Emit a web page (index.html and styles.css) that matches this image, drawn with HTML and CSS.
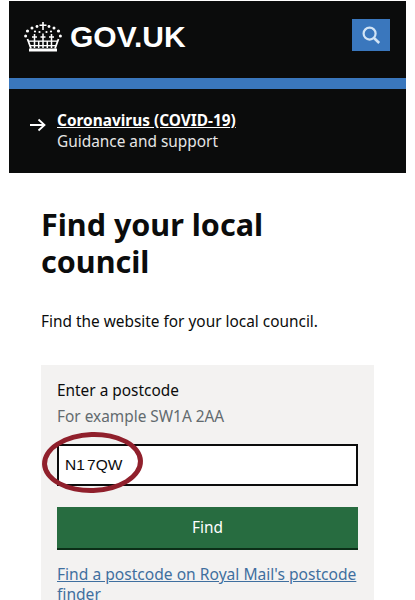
FILE: index.html
```html
<!DOCTYPE html>
<html lang="en">
<head>
  <meta charset="UTF-8" />
  <meta name="viewport" content="width=device-width, initial-scale=1.0"/>
  <title>Find your local council</title>
  <link rel="stylesheet" href="styles.css">
</head>
<body>
  <header class="site-header">
    <div class="masthead">
      <a class="logo" href="#">
        <svg class="crown" viewBox="0 0 38 30" width="38" height="30" aria-hidden="true">
          <g fill="#fff">
            <path d="M18.200 0h1.600v2.500h2.700v1.600h-2.700v4h-1.600v-4h-2.700V2.500h2.700z"/>
            <circle cx="13" cy="4.500" r="1.400"/><circle cx="25" cy="4.500" r="1.400"/>
            <circle cx="8" cy="6" r="1.500"/><circle cx="30" cy="6" r="1.500"/>
            <circle cx="3.500" cy="9" r="1.600"/><circle cx="34.500" cy="9" r="1.600"/>
            <circle cx="1.600" cy="14" r="1.500"/><circle cx="36.400" cy="14" r="1.500"/>
            <circle cx="11" cy="9.500" r="1.100"/><circle cx="27" cy="9.500" r="1.100"/>
            <circle cx="15.500" cy="10" r="1.100"/><circle cx="22.500" cy="10" r="1.100"/>
            <rect x="5" y="26.500" width="28" height="3"/>
            <rect x="4.500" y="18.500" width="29" height="1.300"/>
            <rect x="5.500" y="23" width="27" height="1.300"/>
          </g>
          <path d="M3.500 17l3.500 9.500M34.500 17L31 26.500" stroke="#fff" stroke-width="1.800" fill="none"/>
          <path d="M10.500 12v14M19 11.500v14.500M27.500 12v14M8 15h5M16.500 15h5M25 15h5M14.700 19v7M23.300 19v7" stroke="#fff" stroke-width="1.500" fill="none"/>
        </svg>
        <span class="logo-text">GOV.UK</span>
      </a>
      <button class="search-btn" aria-label="Search">
        <svg viewBox="0 0 20 20" width="20" height="20" aria-hidden="true">
          <circle cx="8.600" cy="8.600" r="6" fill="none" stroke="#d2e4f5" stroke-width="2.200"/>
          <path d="M13 13l5.200 5" stroke="#d2e4f5" stroke-width="2.600" fill="none"/>
        </svg>
      </button>
    </div>
    <div class="blue-bar"></div>
    <a class="notice" href="#">
      <svg class="arrow" viewBox="0 0 16 14" width="16" height="14" aria-hidden="true">
        <path d="M0 7h14M8.500 1.500L14.500 7 8.500 12.500" fill="none" stroke="#fff" stroke-width="1.800"/>
      </svg>
      <span class="notice-text">
        <strong>Coronavirus (COVID-19)</strong>
        <span>Guidance and support</span>
      </span>
    </a>
  </header>

  <main class="content">
    <h1>Find your local council</h1>
    <p class="intro">Find the website for your local council.</p>

    <form class="postcode-box">
      <label for="postcode">Enter a postcode</label>
      <div class="hint">For example SW1A 2AA</div>
      <div class="input-wrap">
        <input id="postcode" type="text" value="N1 7QW">
        <div class="ring"></div>
      </div>
      <button class="find-btn" type="button">Find</button>
      <a class="postcode-link" href="#">Find a postcode on Royal Mail's postcode finder</a>
    </form>
  </main>
</body>
</html>
```

FILE: styles.css
```css
* { margin: 0; padding: 0; box-sizing: border-box; }

html, body {
  height: 600px;
  overflow: hidden;
}

body {
  font-family: "Noto Sans", "Liberation Sans", sans-serif;
  font-size: 15.4px;
  background: #fff;
  color: #0b0c0c;
  padding-top: 1px;
}

.site-header {
  margin: 0 9px;
  width: 397px;
  height: 172px;
  background: #0b0c0c;
}

.masthead {
  height: 77px;
  padding: 18px 16px 0 15px;
  display: flex;
  justify-content: space-between;
  align-items: flex-start;
}

.logo {
  display: flex;
  align-items: center;
  gap: 8px;
  color: #fff;
  text-decoration: none;
}

.logo-text {
  font-family: "Liberation Sans", Arial, sans-serif;
  font-size: 30px;
  font-weight: bold;
  line-height: 36px;
}

.search-btn {
  width: 38px;
  height: 32px;
  background: #3a77bd;
  border: none;
  display: flex;
  align-items: center;
  justify-content: center;
}

.blue-bar {
  height: 11px;
  background: #3a77bd;
}

.notice {
  display: flex;
  align-items: flex-start;
  gap: 11px;
  padding: 21px 0 0 21px;
  color: #fff;
  text-decoration: none;
  line-height: 21px;
}

.arrow {
  margin-top: 8px;
}

.notice-text {
  display: flex;
  flex-direction: column;
}

.notice-text strong {
  text-decoration: underline;
  font-weight: bold;
}

.notice-text span {
  color: #e6e6e6;
}

.content {
  padding: 33px 41px 0;
}

h1 {
  font-size: 30.5px;
  line-height: 37px;
  font-weight: bold;
  margin-bottom: 31px;
}

.intro {
  line-height: 22px;
  margin-bottom: 32px;
}

.postcode-box {
  width: 333px;
  background: #f3f2f1;
  padding: 15px 16px 16px;
  display: flex;
  flex-direction: column;
}

.postcode-box label {
  line-height: 22px;
  margin-bottom: 4px;
}

.hint {
  line-height: 22px;
  color: #626a6e;
  margin-bottom: 16px;
}

.input-wrap {
  position: relative;
  margin-bottom: 21px;
}

.input-wrap input {
  display: block;
  width: 100%;
  height: 42px;
  border: 2px solid #0b0c0c;
  border-radius: 0;
  background: #fff;
  padding: 0 6px;
  font-family: "Liberation Sans", Arial, sans-serif;
  font-size: 15.5px;
  word-spacing: -2px;
  color: #0b0c0c;
}

.ring {
  position: absolute;
  left: -15px;
  top: -12px;
  width: 101px;
  height: 61px;
  border: 5px solid #90202c;
  border-radius: 50%;
  transform: rotate(-2deg);
}

.find-btn {
  height: 43px;
  background: #276c40;
  border: none;
  border-bottom: 2px solid #0b2e17;
  color: #fff;
  font-family: inherit;
  font-size: 15.4px;
  margin-bottom: 14px;
}

.postcode-link {
  color: #3f6f9f;
  font-size: 15.6px;
  line-height: 20px;
}
```
